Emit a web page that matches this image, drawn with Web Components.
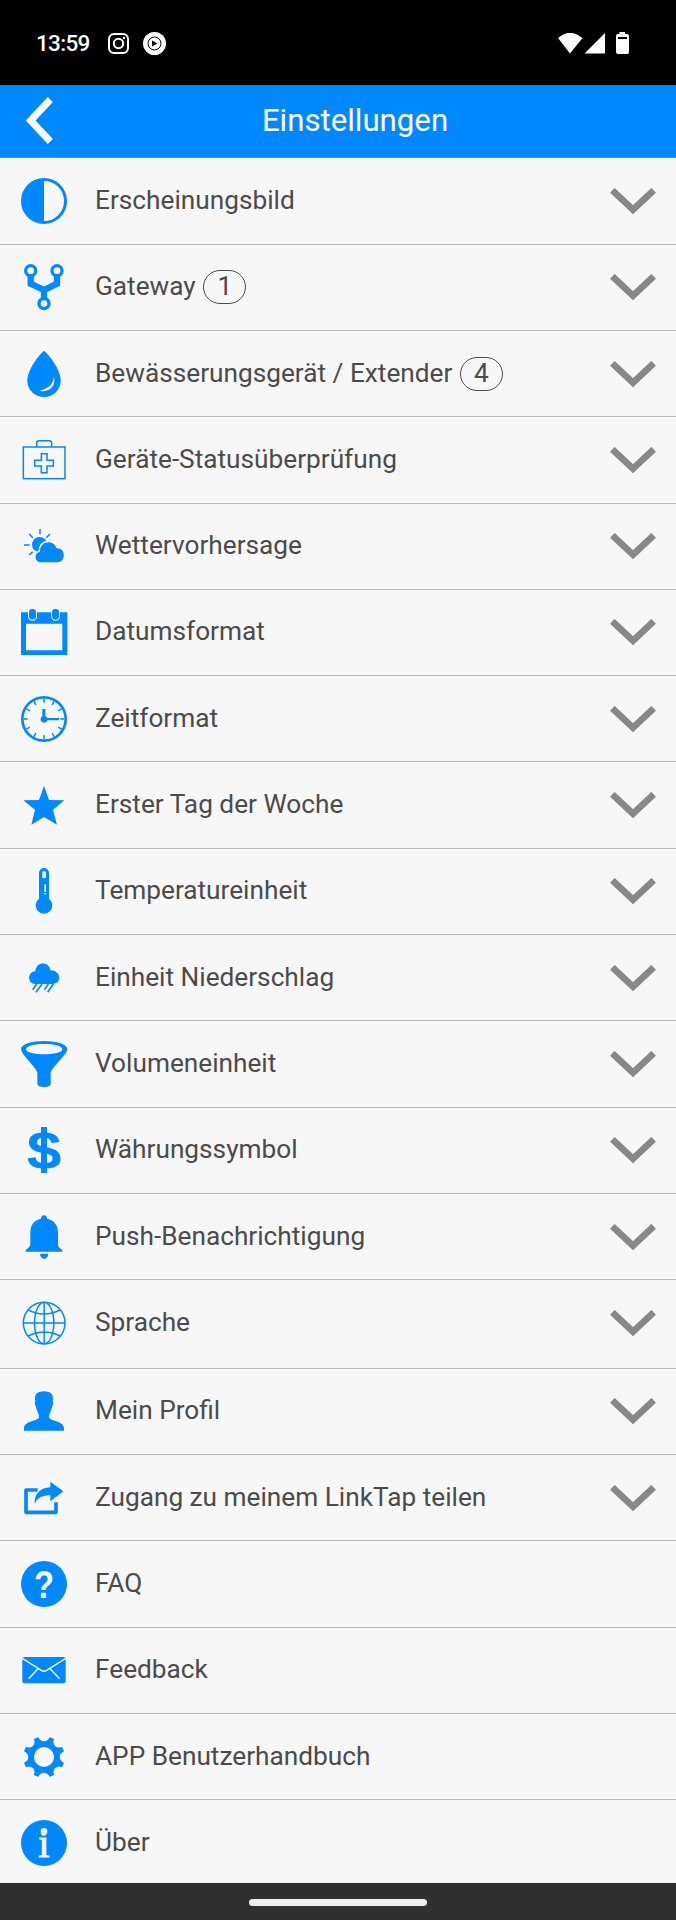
<!DOCTYPE html>
<html lang="de">
<head>
<meta charset="utf-8">
<title>Einstellungen</title>
<style>
  html, body {
    margin: 0;
    height: 100%;
    background: #f7f7f7;
  }
</style>
</head>
<body>
<settings-page></settings-page>

<script>
// every icon is drawn on a 138 x 138 grid
const icons = {
  contrast: `<circle cx="69" cy="69" r="64.500" fill="none" stroke="currentColor" stroke-width="9"/>
    <path d="M69 2A67 67 0 0 0 69 136Z"/>`,
  fork: `<g fill="none" stroke="currentColor">
      <g stroke-width="10"><circle cx="29" cy="20" r="15"/><circle cx="108" cy="20" r="15"/><circle cx="69" cy="118.500" r="15"/></g>
      <path stroke-width="19" d="M29 35V59L69 78L108 59V35M69 76V103"/>
    </g>`,
  drop: `<path d="M69 0C74 0 119 52 119 89A50 49 0 0 1 19 89C19 52 64 0 69 0Z"/>
    <path fill="#f7f7f7" d="M99 76C97 100 82 113 56 119C82 126 106 108 99 76Z"/>`,
  kit: `<g fill="none" stroke="currentColor" stroke-width="4.500">
      <rect x="7" y="30" width="125" height="95"/>
      <path d="M47 29V18Q47 11 54 11H85Q92 11 92 18V29"/>
      <path d="M61 50H78V70H97V87H78V107H61V87H41V70H61Z"/>
    </g>`,
  weather: `<circle cx="56" cy="65" r="23"/>
    <path fill="none" stroke="currentColor" stroke-width="4.500" d="M57 18V34M9 66H26M25 33L35 44M87 33L76 44M25 96L35 86"/>
    <path stroke="#f7f7f7" stroke-width="10" paint-order="stroke" d="M60 118C40 118 38 89 57 86C56 52 99 48 106 76C136 74 135 118 109 118Z"/>`,
  calendar: `<path fill-rule="evenodd" d="M0 10H139V138H0ZM15 44V124H124V44Z"/>
    <g stroke="#f7f7f7" stroke-width="6" paint-order="stroke"><rect x="24" y="0" width="21" height="32" rx="10"/><rect x="93" y="0" width="21" height="32" rx="10"/></g>`,
  clock: `<circle cx="69" cy="69" r="65" fill="none" stroke="currentColor" stroke-width="8"/>
    <g fill="none" stroke="currentColor" stroke-width="4.500">
      ${[0, 30, 60].map(a => `<path d="M69 8V20M69 118V130M8 69H20M118 69H130" transform="rotate(${a} 69 69)"/>`).join('')}
    </g>
    <circle cx="69" cy="70" r="10"/><path d="M64 39H73V66H114V73H64Z"/>`,
  star: `<path d="M69 11L84 54L130 55L96 83L108 128L69 105L31 128L42 83L7 55L54 54Z"/>`,
  thermometer: `<path d="M54 15A15 15 0 0 1 84 15V92A25 25 0 1 1 54 92Z"/>
    <g fill="#f7f7f7"><rect x="64" y="10" width="11" height="21" rx="4"/><rect x="70" y="49" width="5" height="23"/><rect x="70" y="75" width="5" height="4"/></g>`,
  rain: `<path d="M42 87C17 85 20 50 43 49C44 18 86 18 88 46C122 46 124 87 94 87Z"/>
    <path fill="none" stroke="currentColor" stroke-width="5" d="M47 87L35 104M63 87L45 112M82 87L70 104M97 87L80 112"/>`,
  funnel: `<path fill-rule="evenodd" d="M0 25C0 -8 139 -8 139 25C139 40 89 82 89 96V129C89 141 49 141 49 129V96C49 82 0 40 0 25ZM15 25C15 45 124 45 124 25C124 4 15 4 15 25Z"/>`,
  dollar: `<text x="69" y="126" font-family="Liberation Sans" font-weight="700" font-size="162" text-anchor="middle" textLength="104" lengthAdjust="spacingAndGlyphs">$</text>
    <rect x="60" y="0" width="18" height="138"/>`,
  bell: `<path d="M60 14C58 0 80 0 78 14C99 18 111 34 111 55V86C111 99 115 100 124 108V113H14V108C23 100 28 99 28 86V55C28 34 39 18 60 14Z"/>
    <path d="M57 119H82C81 139 58 139 57 119Z"/>`,
  globe: `<g fill="none" stroke="currentColor" stroke-width="4.500">
      <circle cx="69.500" cy="69" r="62.500"/><ellipse cx="69.500" cy="69" rx="29" ry="62.500"/>
      <path d="M69.500 6V132M7 69H132M22 30Q69.500 54 117 30M22 108Q69.500 84 117 108"/>
    </g>`,
  person: `<path d="M69 10C91 10 99 21 95 39C99 45 95 51 93 56C91 70 83 77 84 88C88 101 129 98 129 121V128H9V121C9 98 50 101 54 88C55 77 47 70 45 56C43 51 39 45 43 39C39 21 47 10 69 10Z"/>`,
  share: `<path fill="none" stroke="currentColor" stroke-width="11" stroke-linejoin="round" d="M50 45H15V112H105V82"/>
    <path stroke="#f7f7f7" stroke-width="8" paint-order="stroke" d="M88 20L127 49L88 79V61C66 61 50 67 41 86C40 56 58 38 88 37Z"/>`,
  question: `<circle cx="69" cy="69" r="69"/>
    <text x="69" y="110" fill="#f7f7f7" font-family="Liberation Sans" font-weight="700" font-size="114" text-anchor="middle" textLength="60" lengthAdjust="spacingAndGlyphs">?</text>`,
  mail: `<rect x="4" y="30" width="130" height="79" rx="6"/>
    <path fill="none" stroke="#f7f7f7" stroke-width="4.500" d="M4 34L61 70Q69 75 77 70L134 34M51 65L23 95M87 65L116 95"/>`,
  gear: `<circle cx="69" cy="69" r="62"/>
    <g fill="#f7f7f7"><circle cx="69" cy="69" r="30"/>
      ${[0, 45, 90, 135, 180, 225, 270, 315].map(a => `<circle cx="69" cy="5" r="17" transform="rotate(${a} 69 69)"/>`).join('')}</g>`,
  info: `<circle cx="69" cy="69" r="69"/>
    <text x="69" y="112" fill="#f7f7f7" stroke="#f7f7f7" stroke-width="3" font-family="Liberation Serif" font-size="122" text-anchor="middle">i</text>
    <circle cx="69" cy="34" r="10" fill="#f7f7f7"/>`
};

class AppIcon extends HTMLElement {

  static get observedAttributes() {
    return ['name'];
  }

  constructor() {
    super();
    this.attachShadow({ mode: 'open' });
  }

  attributeChangedCallback(name, oldValue, newValue) {
    this.shadowRoot.innerHTML = `
      <style>
        :host { display: block; width: 46px; height: 46px; color: #0088ff; }
        svg { display: block; width: 100%; height: 100%; overflow: visible; }
      </style>
      <svg viewBox="0 0 138 138" fill="currentColor">${icons[newValue]}</svg>
    `;
  }
}

const statusTemplate = document.createElement('template');
statusTemplate.innerHTML = `
  <style>
    :host {
      display: flex;
      align-items: center;
      box-sizing: border-box;
      height: 85px;
      padding: 1px 47px 0 36px;
      background: #000;
      color: #fff;
    }
    span {
      width: 72px;
      font: 500 22.5px/30px Roboto, sans-serif;
      letter-spacing: -0.7px;
    }
    svg { display: block; }
    .video { margin-left: 14px; }
    .wifi { margin-left: auto; }
    .battery { margin-left: 8px; }
  </style>
  <span><slot></slot></span>
  <svg width="21" height="21" viewBox="0 0 21 21" fill="none" stroke="#fff" stroke-width="2">
    <rect x="1" y="1" width="19" height="19" rx="5"/><circle cx="10.500" cy="10.500" r="4.700"/><circle cx="16" cy="5" r="1.200" fill="#fff" stroke="none"/>
  </svg>
  <svg class="video" width="23" height="23" viewBox="0 0 23 23">
    <circle cx="11.500" cy="11.500" r="11.500" fill="#fff"/><circle cx="11.500" cy="11.500" r="6.500" fill="none" stroke="#000"/><path d="M9 8.500L14.500 11.500L9 14.500Z"/>
  </svg>
  <svg class="wifi" width="50" height="21" viewBox="0 0 50 21" fill="#fff">
    <path d="M0 5Q12 -5.500 24.500 5L12 20.500ZM26.500 20.500L47 0V20.500Z"/>
  </svg>
  <svg class="battery" width="13" height="22" viewBox="0 0 13 22">
    <path fill="#fff" d="M3.500 0H9V2H11Q13 2 13 4V20Q13 22 11 22H2Q0 22 0 20V4Q0 2 2 2H3.500Z"/><path d="M2 5H11V7H2Z"/>
  </svg>
`;

class StatusBar extends HTMLElement {
  constructor() {
    super();
    this.attachShadow({ mode: 'open' });
    this.shadowRoot.appendChild(statusTemplate.content.cloneNode(true));
  }
}

const headerTemplate = document.createElement('template');
headerTemplate.innerHTML = `
  <style>
    :host {
      display: grid;
      grid-template-columns: 80px 1fr 80px;
      align-items: center;
      box-sizing: border-box;
      height: 73px;
      border-bottom: 1px solid #5f93c4;
      background: #0088ff;
      color: #fff;
    }
    svg { display: block; margin: -1px 0 0 26px; }
    h1 {
      margin: -1px 0 0 34px;
      font: 400 31.2px/40px Roboto, sans-serif;
      text-align: center;
    }
  </style>
  <svg width="27" height="47" viewBox="0 0 81 140" fill="none" stroke="#fff" stroke-width="21"><path d="M73 7L14 70L73 133"/></svg>
  <h1><slot></slot></h1>
`;

class AppHeader extends HTMLElement {
  constructor() {
    super();
    this.attachShadow({ mode: 'open' });
    this.shadowRoot.appendChild(headerTemplate.content.cloneNode(true));
  }
}

const rowTemplate = document.createElement('template');
rowTemplate.innerHTML = `
  <style>
    :host {
      display: flex;
      align-items: center;
      flex: none;
      box-sizing: border-box;
      height: 86.33px;
      padding: 0 20px 0 21px;
      border-bottom: 1px solid #b9b9b9;
      color: #4b4b4b;
    }
    .label {
      display: flex;
      align-items: center;
      flex: 1;
      margin: -2px 0 0 28px;
      font: 400 26.23px/34px Roboto, sans-serif;
      white-space: nowrap;
    }
    .count {
      box-sizing: border-box;
      width: 43px;
      height: 34px;
      margin: 2px 0 0 7.5px;
      border: 1.5px solid #4b4b4b;
      border-radius: 17px;
      line-height: 30px;
      text-align: center;
    }
    .arrow { margin-top: 1px; }
  </style>
  <app-icon></app-icon>
  <div class="label"><slot></slot></div>
`;

class SettingsRow extends HTMLElement {
  constructor() {
    super();
    this.attachShadow({ mode: 'open' });
    this.shadowRoot.appendChild(rowTemplate.content.cloneNode(true));
  }

  connectedCallback() {
    const label = this.shadowRoot.querySelector('.label');
    this.shadowRoot.querySelector('app-icon').setAttribute('name', this.getAttribute('icon'));
    if (this.hasAttribute('count')) {
      label.insertAdjacentHTML('beforeend', `<span class="count">${this.getAttribute('count')}</span>`);
    }
    if (!this.hasAttribute('plain')) {
      label.insertAdjacentHTML('afterend', `
        <svg class="arrow" width="46" height="27" viewBox="0 0 138 81" fill="none" stroke="#888" stroke-width="20"><path d="M7 7L69 65L131 7"/></svg>
      `);
    }
  }
}

const pageTemplate = document.createElement('template');
pageTemplate.innerHTML = `
  <style>
    :host {
      display: flex;
      flex-direction: column;
      height: 1920px;
    }
    main {
      display: flex;
      flex-direction: column;
      flex: 1;
      min-height: 0;
      overflow: hidden;
      padding-top: 0.2px;
      background: #f7f7f7;
    }
    .spaced { height: 88.3px; padding-bottom: 3px; }
    footer {
      display: flex;
      align-items: center;
      justify-content: center;
      height: 37px;
      background: #303030;
    }
    footer div {
      width: 178px;
      height: 7px;
      margin-top: 2px;
      border-radius: 4px;
      background: #eee;
    }
  </style>
  <status-bar>13:59</status-bar>
  <app-header>Einstellungen</app-header>
  <main>
    <settings-row icon="contrast">Erscheinungsbild</settings-row>
    <settings-row icon="fork" count="1">Gateway</settings-row>
    <settings-row icon="drop" count="4">Bewässerungsgerät / Extender</settings-row>
    <settings-row icon="kit">Geräte-Statusüberprüfung</settings-row>
    <settings-row icon="weather">Wettervorhersage</settings-row>
    <settings-row icon="calendar">Datumsformat</settings-row>
    <settings-row icon="clock">Zeitformat</settings-row>
    <settings-row icon="star">Erster Tag der Woche</settings-row>
    <settings-row icon="thermometer">Temperatureinheit</settings-row>
    <settings-row icon="rain">Einheit Niederschlag</settings-row>
    <settings-row icon="funnel">Volumeneinheit</settings-row>
    <settings-row icon="dollar">Währungssymbol</settings-row>
    <settings-row icon="bell">Push-Benachrichtigung</settings-row>
    <settings-row icon="globe" class="spaced">Sprache</settings-row>
    <settings-row icon="person">Mein Profil</settings-row>
    <settings-row icon="share">Zugang zu meinem LinkTap teilen</settings-row>
    <settings-row icon="question" plain>FAQ</settings-row>
    <settings-row icon="mail" plain>Feedback</settings-row>
    <settings-row icon="gear" plain>APP Benutzerhandbuch</settings-row>
    <settings-row icon="info" plain>Über</settings-row>
  </main>
  <footer><div></div></footer>
`;

class SettingsPage extends HTMLElement {
  constructor() {
    super();
    this.attachShadow({ mode: 'open' });
    this.shadowRoot.appendChild(pageTemplate.content.cloneNode(true));
  }
}

window.customElements.define('app-icon', AppIcon);
window.customElements.define('status-bar', StatusBar);
window.customElements.define('app-header', AppHeader);
window.customElements.define('settings-row', SettingsRow);
window.customElements.define('settings-page', SettingsPage);
</script>
</body>
</html>
